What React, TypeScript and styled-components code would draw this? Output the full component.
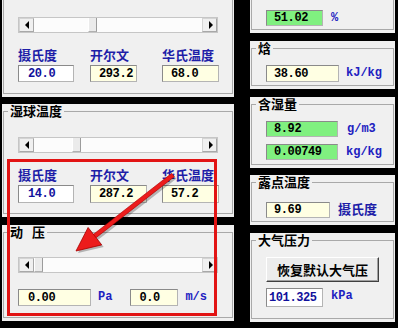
import styled, { createGlobalStyle } from "styled-components";

type Tone = "white" | "cream" | "green";

const tones: Record<Tone, { bg: string; ink: string }> = {
  white: { bg: "#ffffff", ink: "#10109c" },
  cream: { bg: "#ffffe3", ink: "#000000" },
  green: { bg: "#80f080", ink: "#000000" },
};

const TRACK = 168;
const THUMB = 9;

function ScrollBar({ pos }: { pos: number }) {
  return (
    <Scroll>
      <ArrowBtn>
        <Tri $dir="left" />
      </ArrowBtn>
      <Track>
        <Thumb style={{ marginLeft: Math.round(pos * (TRACK - THUMB)) }} />
      </Track>
      <ArrowBtn>
        <Tri $dir="right" />
      </ArrowBtn>
    </Scroll>
  );
}

function TempBlock(props: { pos: number; c: string; k: string; f: string; kw: number; h: number }) {
  return (
    <>
      <ScrollBar pos={props.pos} />
      <Labels>
        <span>摄氏度</span>
        <span>开尔文</span>
        <span>华氏温度</span>
      </Labels>
      <Cells>
        <Field $w={56} $h={props.h} $tone="white" $pad={9}>{props.c}</Field>
        <Field $w={props.kw} $h={props.h} $tone="cream" $pad={8}>{props.k}</Field>
        <Field $w={57} $h={props.h} $tone="cream" $pad={8}>{props.f}</Field>
      </Cells>
    </>
  );
}

export default function App() {
  return (
    <>
      <GlobalStyle />
      <Page>
        <Column>
          <Panel $h={97}>
            <Group $cut>
              <Body $top={17}>
                <TempBlock pos={0.34} c="20.0" k="293.2" f="68.0" kw={47} h={17} />
              </Body>
            </Group>
          </Panel>
          <Panel $h={113} $mt={7}>
            <Group>
              <Legend>湿球温度</Legend>
              <Body $top={19}>
                <TempBlock pos={0.24} c="14.0" k="287.2" f="57.2" kw={57} h={18} />
              </Body>
            </Group>
          </Panel>
          <Panel $h={96} $mt={8}>
            <Group>
              <Legend $spaced>动 压</Legend>
              <Body $top={18}>
                <ScrollBar pos={0} />
                <Row $mt={16}>
                  <Field $w={73} $h={17} $tone="cream" $pad={9}>0.00</Field>
                  <Unit $ml={7}>Pa</Unit>
                  <Field $w={48} $h={17} $tone="cream" $pad={8} $ml={18}>0.0</Field>
                  <Unit $ml={7}>m/s</Unit>
                </Row>
              </Body>
            </Group>
          </Panel>
        </Column>

        <Column>
          <Panel $h={33}>
            <Group $cut>
              <Body $top={10}>
                <Row>
                  <Field $w={57} $h={16} $tone="green" $pad={7}>51.02</Field>
                  <Unit $ml={8}>%</Unit>
                </Row>
              </Body>
            </Group>
          </Panel>
          <Panel $h={48} $mt={8}>
            <Group>
              <Legend>焓</Legend>
              <Body $top={10}>
                <Row>
                  <Field $w={73} $h={17} $tone="cream" $pad={7}>38.60</Field>
                  <Unit $ml={7}>kJ/kg</Unit>
                </Row>
              </Body>
            </Group>
          </Panel>
          <Panel $h={71} $mt={8}>
            <Group>
              <Legend>含湿量</Legend>
              <Body $top={10}>
                <Row>
                  <Field $w={72} $h={16} $tone="green" $pad={7}>8.92</Field>
                  <Unit $ml={9}>g/m3</Unit>
                </Row>
                <Row $mt={7}>
                  <Field $w={72} $h={16} $tone="green" $pad={7}>0.00749</Field>
                  <Unit $ml={8}>kg/kg</Unit>
                </Row>
              </Body>
            </Group>
          </Panel>
          <Panel $h={50} $mt={7}>
            <Group>
              <Legend>露点温度</Legend>
              <Body $top={13}>
                <Row>
                  <Field $w={64} $h={16} $tone="cream" $pad={7}>9.69</Field>
                  <CnUnit>摄氏度</CnUnit>
                </Row>
              </Body>
            </Group>
          </Panel>
          <Panel $h={89} $mt={8}>
            <Group>
              <Legend>大气压力</Legend>
              <Body $top={10}>
                <ResetButton>恢复默认大气压</ResetButton>
                <Row $mt={6}>
                  <Field $w={57} $h={19} $tone="white" $pad={2}>101.325</Field>
                  <Unit $ml={8}>kPa</Unit>
                </Row>
              </Body>
            </Group>
          </Panel>
        </Column>

        <Markup viewBox="0 0 398 328" width={398} height={328}>
          <rect x={8.5} y={160.5} width={207} height={154} fill="none" stroke="#e21414" strokeWidth={3} />
          <g transform="translate(2 2)" fill="#000" opacity={0.25}>
            <polygon points="174.3,176.7 171.7,173.3 92.6,235 95.2,238.4" />
            <polygon points="76,251 101.7,244.9 88.1,227.5" />
          </g>
          <polygon points="174.3,176.7 171.7,173.3 92.6,235 95.2,238.4" fill="#ec1c1c" stroke="#a80000" strokeWidth={0.6} />
          <polygon points="76,251 101.7,244.9 88.1,227.5" fill="#ec1c1c" stroke="#a80000" strokeWidth={0.8} />
        </Markup>
      </Page>
    </>
  );
}

const GlobalStyle = createGlobalStyle`
  html, body {
    margin: 0;
    padding: 0;
    background: #000;
  }
  body {
    font-family: "Noto Sans CJK SC", "Noto Sans", sans-serif;
  }
`;

const Page = styled.div`
  position: relative;
  display: flex;
  gap: 16px;
  width: 398px;
  height: 328px;
  padding-left: 2px;
  box-sizing: border-box;
  overflow: hidden;
  background: #000;
`;

const Column = styled.div`
  display: flex;
  flex-direction: column;
  &:first-child {
    width: 232px;
  }
  &:nth-child(2) {
    width: 145px;
  }
`;

const Panel = styled.div<{ $h: number; $mt?: number }>`
  height: ${(p) => p.$h}px;
  margin-top: ${(p) => p.$mt ?? 0}px;
  padding: 0 1px 3px;
  box-sizing: border-box;
  display: flex;
  flex-direction: column;
  background: #f0f0f0;
`;

const Group = styled.fieldset<{ $cut?: boolean }>`
  flex: 1;
  min-width: 0;
  margin: 0;
  padding: 0;
  border: 1px solid #a9a9a9;
  ${(p) => p.$cut && "border-top: none;"}
  box-sizing: border-box;
`;

const Legend = styled.legend<{ $spaced?: boolean }>`
  margin-left: 4px;
  padding: 0 2px;
  font-size: 13px;
  line-height: 14px;
  font-weight: 700;
  color: #000;
  word-spacing: ${(p) => (p.$spaced ? "6px" : "0")};
`;

const Body = styled.div<{ $top: number }>`
  display: flex;
  flex-direction: column;
  align-items: flex-start;
  padding: ${(p) => p.$top}px 14px 0;
`;

const Scroll = styled.div`
  display: flex;
  width: 200px;
  height: 16px;
  box-sizing: border-box;
  border: 1px solid #c6c6c6;
  background: #fcfcfc;
`;

const ArrowBtn = styled.div`
  width: 15px;
  height: 14px;
  display: flex;
  align-items: center;
  justify-content: center;
  background: #f0f0f0;
  box-sizing: border-box;
  border: 1px solid #d4d4d4;
  border-right-color: #a8a8a8;
  border-bottom-color: #a8a8a8;
`;

const Tri = styled.div<{ $dir: "left" | "right" }>`
  width: 0;
  height: 0;
  border-top: 4px solid transparent;
  border-bottom: 4px solid transparent;
  ${(p) =>
    p.$dir === "left" ? "border-right: 4px solid #000;" : "border-left: 4px solid #000; margin-left: 2px;"}
`;

const Track = styled.div`
  flex: 1;
  display: flex;
`;

const Thumb = styled.div`
  width: ${THUMB}px;
  height: 14px;
  box-sizing: border-box;
  background: #ebebeb;
  border-left: 1px solid #ffffff;
  border-right: 1px solid #9c9c9c;
  border-bottom: 1px solid #b0b0b0;
`;

const Labels = styled.div`
  display: grid;
  grid-template-columns: 72px 72px auto;
  margin-top: 14px;
  height: 16px;
  font-size: 13px;
  line-height: 16px;
  font-weight: 700;
  color: #1e1ea8;
`;

const Cells = styled.div`
  display: grid;
  grid-template-columns: 72px 72px auto;
  align-items: start;
  margin-top: 2px;
`;

const Row = styled.div<{ $mt?: number }>`
  display: flex;
  align-items: flex-start;
  margin-top: ${(p) => p.$mt ?? 0}px;
`;

const Field = styled.div<{ $w: number; $h: number; $tone: Tone; $pad: number; $ml?: number }>`
  width: ${(p) => p.$w}px;
  height: ${(p) => p.$h}px;
  margin-left: ${(p) => p.$ml ?? 0}px;
  padding-left: ${(p) => p.$pad}px;
  box-sizing: border-box;
  display: flex;
  align-items: center;
  background: ${(p) => tones[p.$tone].bg};
  color: ${(p) => tones[p.$tone].ink};
  border: 1px solid #8a8a8a;
  border-right-color: #b4b4b4;
  border-bottom-color: #b4b4b4;
  font-family: "Liberation Mono", monospace;
  font-size: 12px;
  letter-spacing: -0.4px;
  font-weight: 700;
`;

const Unit = styled.span<{ $ml: number }>`
  margin-left: ${(p) => p.$ml}px;
  margin-top: 1px;
  font-family: "Liberation Mono", monospace;
  font-size: 12px;
  line-height: 14px;
  font-weight: 700;
  color: #2020c0;
`;

const CnUnit = styled.span`
  margin-left: 8px;
  font-size: 13px;
  line-height: 14px;
  font-weight: 700;
  color: #1e1ea8;
`;

const ResetButton = styled.button`
  width: 113px;
  height: 25px;
  padding: 0;
  box-sizing: border-box;
  background: #ececec;
  border: 1px solid;
  border-color: #ffffff #404040 #404040 #ffffff;
  box-shadow: inset -1px -1px 0 #a0a0a0;
  font-family: "Noto Sans CJK SC", sans-serif;
  font-size: 13px;
  font-weight: 700;
  color: #000;
`;

const Markup = styled.svg`
  position: absolute;
  left: 0;
  top: 0;
  pointer-events: none;
`;
